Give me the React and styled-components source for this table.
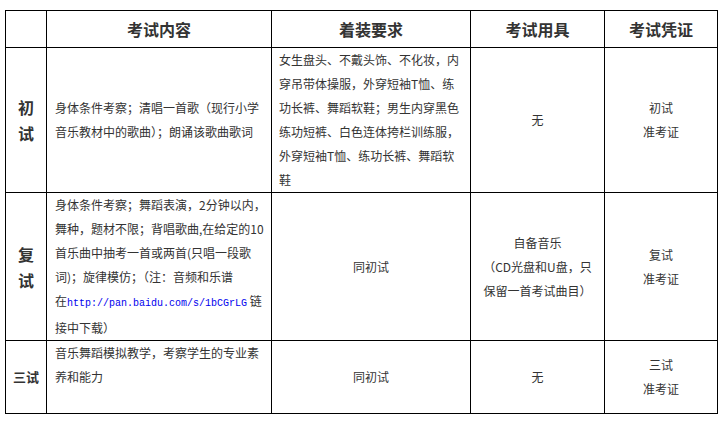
import React from "react";
import styled, { createGlobalStyle } from "styled-components";

const GlobalStyle = createGlobalStyle`
  html, body {
    margin: 0;
    padding: 0;
    background: #fff;
  }
  body {
    font-family: "Noto Sans CJK SC", "Liberation Sans", sans-serif;
    color: #333;
  }
`

const Page = styled.div`
  padding: 10px 0 0 5px;
`

const Table = styled.table`
  border-collapse: collapse;
  table-layout: fixed;
  width: 712px;
  font-size: 12px;
  line-height: 24px;
`

const HeadCell = styled.th`
  border: 1px solid #000;
  height: 36px;
  padding: 0;
  font-size: 16px;
  font-weight: bold;
  color: #333;
  text-align: center;
  vertical-align: middle;
`

const LabelCell = styled.td`
  border: 1px solid #000;
  padding: 0;
  font-size: ${p => (p.$small ? "13px" : "16px")};
  font-weight: bold;
  line-height: ${p => (p.$small ? "24px" : "26px")};
  color: #333;
  text-align: center;
  vertical-align: middle;
  white-space: nowrap;
`

const TextCell = styled.td`
  border: 1px solid #000;
  padding: 0 ${p => p.$pad || 7}px;
  text-align: left;
  vertical-align: ${p => (p.$top ? "top" : "middle")};
  white-space: nowrap;
`

const CenterCell = styled.td`
  border: 1px solid #000;
  padding: 0 4px;
  text-align: center;
  vertical-align: middle;
`

const Link = styled.a`
  font-family: "Liberation Mono", monospace;
  font-size: 10px;
  color: #0000ee;
  text-decoration: none;
`

export default function App() {
  return (
    <Page>
      <GlobalStyle />
      <Table>
        <colgroup>
          <col style={{ width: 41 }} />
          <col style={{ width: 225 }} />
          <col style={{ width: 199 }} />
          <col style={{ width: 134 }} />
          <col style={{ width: 113 }} />
        </colgroup>
        <thead>
          <tr>
            <HeadCell></HeadCell>
            <HeadCell>考试内容</HeadCell>
            <HeadCell>着装要求</HeadCell>
            <HeadCell>考试用具</HeadCell>
            <HeadCell>考试凭证</HeadCell>
          </tr>
        </thead>
        <tbody>
          <tr>
            <LabelCell>初<br />试</LabelCell>
            <TextCell $pad={8}>
              身体条件考察；清唱一首歌（现行小学<br />
              音乐教材中的歌曲）；朗诵该歌曲歌词
            </TextCell>
            <TextCell>
              女生盘头、不戴头饰、不化妆，内<br />
              穿吊带体操服，外穿短袖T恤、练<br />
              功长裤、舞蹈软鞋；男生内穿黑色<br />
              练功短裤、白色连体挎栏训练服，<br />
              外穿短袖T恤、练功长裤、舞蹈软<br />
              鞋
            </TextCell>
            <CenterCell>无</CenterCell>
            <CenterCell>初试<br />准考证</CenterCell>
          </tr>
          <tr>
            <LabelCell>复<br />试</LabelCell>
            <TextCell $pad={8}>
              身体条件考察；舞蹈表演，2分钟以内，<br />
              舞种，题材不限；背唱歌曲,在给定的10<br />
              首乐曲中抽考一首或两首(只唱一段歌<br />
              词)；旋律模仿；（注：音频和乐谱<br />
              在<Link href="#">http://pan.baidu.com/s/1bCGrLG</Link> 链<br />
              接中下载）
            </TextCell>
            <CenterCell>同初试</CenterCell>
            <CenterCell>
              自备音乐<br />
              （CD光盘和U盘，只<br />
              保留一首考试曲目）
            </CenterCell>
            <CenterCell>复试<br />准考证</CenterCell>
          </tr>
          <tr>
            <LabelCell $small>三试</LabelCell>
            <TextCell $pad={8} $top>
              音乐舞蹈模拟教学，考察学生的专业素<br />
              养和能力<br />
              &nbsp;
            </TextCell>
            <CenterCell>同初试</CenterCell>
            <CenterCell>无</CenterCell>
            <CenterCell>三试<br />准考证</CenterCell>
          </tr>
        </tbody>
      </Table>
    </Page>
  );
}
